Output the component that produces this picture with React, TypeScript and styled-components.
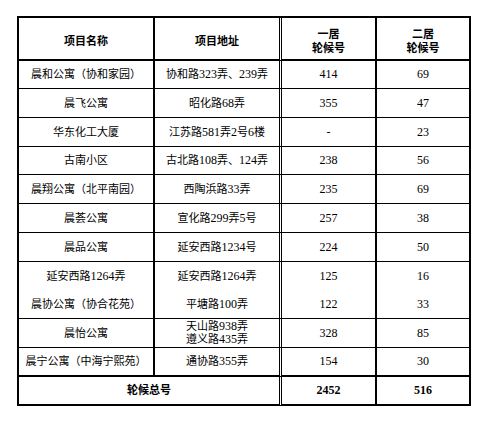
import React from 'react';
import styled, { createGlobalStyle } from 'styled-components';

const GlobalStyle = createGlobalStyle`
  html, body {
    margin: 0;
    padding: 0;
    background: #ffffff;
  }
  body {
    font-family: "Liberation Serif", "Noto Sans CJK SC", serif;
    color: #000000;
  }
`;

type Bottom = 'thin' | 'thick' | 'none';
type Side = 'solid' | 'double';

const Page = styled.div`
  padding: 16px 0 0 17px;
  width: 494px;
  height: 422px;
  box-sizing: border-box;
`;

const Sheet = styled.table`
  width: 454px;
  table-layout: fixed;
  border-collapse: separate;
  border-spacing: 0;
  border-left: 2px solid #000;
  border-top: 2px solid #000;
`;

const Row = styled.tr<{ $h: number }>`
  height: ${(p) => p.$h}px;
`;

const Cell = styled.td<{ $side: Side; $bottom: Bottom; $bold?: boolean; $num?: boolean }>`
  padding: 0;
  text-align: center;
  vertical-align: middle;
  font-size: ${(p) => (p.$num ? 12 : 11)}px;
  line-height: 13px;
  font-weight: ${(p) => (p.$bold ? 700 : 400)};
  border-right: ${(p) => (p.$side === 'double' ? '3px double #000' : '2px solid #000')};
  border-bottom: ${(p) =>
    p.$bottom === 'thick' ? '2px solid #000' : p.$bottom === 'thin' ? '1px solid #000' : '0'};
  white-space: nowrap;
`;

const HeadCell = styled(Cell)`
  padding-top: 4px;
  font-weight: 700;
  line-height: 14px;
`;

const Num = styled.span`
  font-size: 12px;
`;

const Line = styled.div`
  line-height: 13px;
`;

// digits are set in the serif at 12px, the chinese a bit smaller
const Mixed = ({ text }: { text: string }) => (
  <>
    {text.split(/(\d+)/).map((part, i) =>
      /^\d+$/.test(part) ? <Num key={i}>{part}</Num> : <React.Fragment key={i}>{part}</React.Fragment>
    )}
  </>
);

interface Project {
  name: string;
  address: string[];
  first: string;
  second: string;
  h: number;
  bottom: Bottom;
}

const projects: Project[] = [
  { name: '晨和公寓（协和家园）', address: ['协和路323弄、239弄'], first: '414', second: '69', h: 28, bottom: 'thin' },
  { name: '晨飞公寓', address: ['昭化路68弄'], first: '355', second: '47', h: 29, bottom: 'thin' },
  { name: '华东化工大厦', address: ['江苏路581弄2号6楼'], first: '-', second: '23', h: 29, bottom: 'thin' },
  { name: '古南小区', address: ['古北路108弄、124弄'], first: '238', second: '56', h: 28, bottom: 'thin' },
  { name: '晨翔公寓（北平南园）', address: ['西陶浜路33弄'], first: '235', second: '69', h: 29, bottom: 'thin' },
  { name: '晨荟公寓', address: ['宣化路299弄5号'], first: '257', second: '38', h: 29, bottom: 'thin' },
  { name: '晨品公寓', address: ['延安西路1234号'], first: '224', second: '50', h: 29, bottom: 'thin' },
  { name: '延安西路1264弄', address: ['延安西路1264弄'], first: '125', second: '16', h: 28, bottom: 'none' },
  { name: '晨协公寓（协合花苑）', address: ['平塘路100弄'], first: '122', second: '33', h: 29, bottom: 'thin' },
  { name: '晨怡公寓', address: ['天山路938弄', '遵义路435弄'], first: '328', second: '85', h: 29, bottom: 'thin' },
  { name: '晨宁公寓（中海宁熙苑）', address: ['通协路355弄'], first: '154', second: '30', h: 29, bottom: 'thick' },
];

export default function App() {
  return (
    <Page>
      <GlobalStyle />
      <Sheet>
        <colgroup>
          <col style={{ width: 136 }} />
          <col style={{ width: 127 }} />
          <col style={{ width: 95 }} />
          <col style={{ width: 94 }} />
        </colgroup>
        <tbody>
          <Row $h={43}>
            <HeadCell $side="solid" $bottom="thick">项目名称</HeadCell>
            <HeadCell $side="double" $bottom="thick">项目地址</HeadCell>
            <HeadCell $side="solid" $bottom="thick">
              一居
              <br />
              轮候号
            </HeadCell>
            <HeadCell $side="solid" $bottom="thick">
              二居
              <br />
              轮候号
            </HeadCell>
          </Row>
          {projects.map((p) => (
            <Row key={p.name} $h={p.h}>
              <Cell $side="solid" $bottom={p.bottom}>
                <Mixed text={p.name} />
              </Cell>
              <Cell $side="double" $bottom={p.bottom}>
                {p.address.map((a) => (
                  <Line key={a}>
                    <Mixed text={a} />
                  </Line>
                ))}
              </Cell>
              <Cell $side="solid" $bottom={p.bottom} $num>
                {p.first}
              </Cell>
              <Cell $side="solid" $bottom={p.bottom} $num>
                {p.second}
              </Cell>
            </Row>
          ))}
          <Row $h={29}>
            <Cell colSpan={2} $side="double" $bottom="thick" $bold>
              轮候总号
            </Cell>
            <Cell $side="solid" $bottom="thick" $bold $num>
              2452
            </Cell>
            <Cell $side="solid" $bottom="thick" $bold $num>
              516
            </Cell>
          </Row>
        </tbody>
      </Sheet>
    </Page>
  );
}
